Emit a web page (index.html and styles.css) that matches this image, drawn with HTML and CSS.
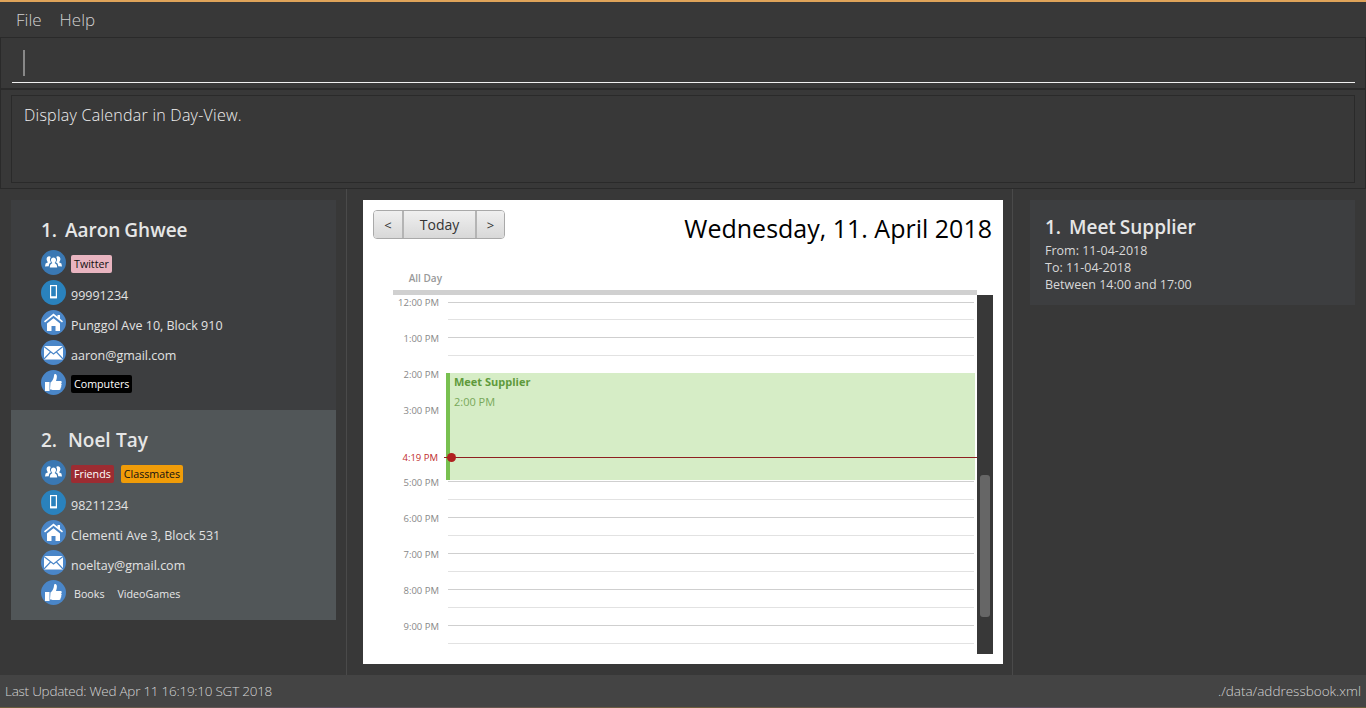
FILE: index.html
```html
<!DOCTYPE html>
<html lang="en">
<head>
    <meta charset="UTF-8">
    <title>Address App</title>
    <link rel="stylesheet" href="styles.css">
</head>
<body>
<svg class="sprites" width="0" height="0">
    <symbol id="i-group" viewBox="0 0 25 25">
        <path fill="#fff" d="M4 16.500l.6-3 2.400-1.300C6 11.200 5.600 10 5.600 9c0-1.700 1.200-2.800 2.500-2.800.7 0 1.300.3 1.700.7-.5.7-.8 1.500-.8 2.300 0 1.300.5 2.400 1.100 3.100l-1.300 1c-.6.600-.9 1.500-1 3z"/>
        <path fill="#fff" d="M21 16.500l-.6-3-2.400-1.300c1-1 1.400-2.200 1.400-3.200 0-1.700-1.200-2.800-2.500-2.800-.7 0-1.300.3-1.700.7.500.7.800 1.500.8 2.300 0 1.300-.5 2.400-1.100 3.100l1.300 1c.6.600.9 1.500 1 3z"/>
        <path fill="#fff" d="M8.800 17.500c.1-2 .5-3 1.200-3.500l1.400-.9c-.9-.9-1.400-2-1.400-3.100 0-1.400 1.100-2.500 2.500-2.500s2.500 1.100 2.500 2.500c0 1.100-.5 2.200-1.400 3.100l1.400.9c.7.500 1.100 1.500 1.200 3.500z"/>
    </symbol>
    <symbol id="i-phone" viewBox="0 0 25 25">
        <path fill="none" stroke="#fff" stroke-width="1.200" d="M9.600 5.600h5.800v12H9.600z"/>
        <path fill="#fff" d="M9.200 16.200h6.600v2H9.200z"/>
    </symbol>
    <symbol id="i-home" viewBox="0 0 25 25">
        <path fill="#fff" d="M12.500 3.500l4 3.200V5h2.500v3.700l3 2.500-1 1.300-8.500-6.800L4 12.500l-1-1.300z"/>
        <path fill="#fff" d="M12.500 8.300l6.500 5.200V21h-4.500v-5h-4v5H6v-7.500z"/>
    </symbol>
    <symbol id="i-mail" viewBox="0 0 25 25">
        <path fill="#fff" d="M3 6h19v13.500H3z"/>
        <path fill="none" stroke="#4a86c8" stroke-width="1.100" d="M3 6.500l9.500 7.500L22 6.500M3 19l7-7.500M22 19l-7-7.500"/>
    </symbol>
    <symbol id="i-thumb" viewBox="0 0 25 25">
        <path fill="#fff" d="M4 12h4.500v9H4z"/>
        <path fill="#fff" d="M9.500 12.500c2-1.500 3.400-4 3.700-8 .1-.8 2-.7 2.500.8.500 1.700 0 4-.7 5.700h4.500c1.600 0 1.700 2 .5 2.400 1 .5.900 2-.1 2.400.7.600.5 1.900-.4 2.200.3 1-.3 2-1.400 2h-6.600c-1 0-1.500-.5-2.500-.7z"/>
    </symbol>
</svg>

<div class="app">
    <nav class="menu-bar">
        <span class="menu-item">File</span>
        <span class="menu-item">Help</span>
    </nav>

    <section class="command-box">
        <div class="command-field"><span class="caret"></span></div>
    </section>

    <section class="result-box">
        <div class="result-text">Display Calendar in Day-View.</div>
    </section>

    <main class="main">
        <aside class="person-panel">
            <article class="person-card">
                <h2 class="card-title">1.&nbsp; Aaron Ghwee</h2>
                <div class="row tags-row">
                    <svg class="icon icon-dark"><use href="#i-group"/></svg>
                    <span class="tag tag-pink">Twitter</span>
                </div>
                <div class="row">
                    <svg class="icon icon-teal"><use href="#i-phone"/></svg>
                    <span>99991234</span>
                </div>
                <div class="row">
                    <svg class="icon"><use href="#i-home"/></svg>
                    <span>Punggol Ave 10, Block 910</span>
                </div>
                <div class="row">
                    <svg class="icon"><use href="#i-mail"/></svg>
                    <span>aaron@gmail.com</span>
                </div>
                <div class="row tags-row">
                    <svg class="icon"><use href="#i-thumb"/></svg>
                    <span class="tag tag-black">Computers</span>
                </div>
            </article>

            <article class="person-card selected">
                <h2 class="card-title">2.&nbsp; Noel Tay</h2>
                <div class="row tags-row">
                    <svg class="icon icon-dark"><use href="#i-group"/></svg>
                    <span class="tag tag-red">Friends</span>
                    <span class="tag tag-orange">Classmates</span>
                </div>
                <div class="row">
                    <svg class="icon icon-teal"><use href="#i-phone"/></svg>
                    <span>98211234</span>
                </div>
                <div class="row">
                    <svg class="icon"><use href="#i-home"/></svg>
                    <span>Clementi Ave 3, Block 531</span>
                </div>
                <div class="row">
                    <svg class="icon"><use href="#i-mail"/></svg>
                    <span>noeltay@gmail.com</span>
                </div>
                <div class="row tags-row">
                    <svg class="icon"><use href="#i-thumb"/></svg>
                    <span class="tag">Books</span>
                    <span class="tag">VideoGames</span>
                </div>
            </article>
        </aside>

        <section class="calendar-panel">
            <div class="calendar">
                <header class="cal-head">
                    <div class="cal-nav">
                        <span class="cal-btn cal-arrow">&lt;</span>
                        <span class="cal-btn cal-today">Today</span>
                        <span class="cal-btn cal-arrow">&gt;</span>
                    </div>
                    <div class="cal-date">Wednesday, 11. April 2018</div>
                </header>
                <div class="all-day">All Day</div>
                <div class="all-day-bar"></div>
                <div class="day-view">
                    <div class="hours">
                        <div class="hour"><span class="hour-label">12:00 PM</span></div>
                        <div class="hour"><span class="hour-label">1:00 PM</span></div>
                        <div class="hour"><span class="hour-label">2:00 PM</span></div>
                        <div class="hour"><span class="hour-label">3:00 PM</span></div>
                        <div class="hour"><span class="hour-label"></span></div>
                        <div class="hour"><span class="hour-label">5:00 PM</span></div>
                        <div class="hour"><span class="hour-label">6:00 PM</span></div>
                        <div class="hour"><span class="hour-label">7:00 PM</span></div>
                        <div class="hour"><span class="hour-label">8:00 PM</span></div>
                        <div class="hour"><span class="hour-label">9:00 PM</span></div>
                    </div>
                    <div class="event">
                        <div class="event-title">Meet Supplier</div>
                        <div class="event-time">2:00 PM</div>
                    </div>
                    <div class="now-line">
                        <span class="now-label">4:19 PM</span>
                        <span class="now-dot"></span>
                    </div>
                    <div class="cal-scroll"><div class="cal-thumb"></div></div>
                </div>
            </div>
        </section>

        <aside class="event-panel">
            <article class="event-card">
                <h2 class="card-title">1.&nbsp; Meet Supplier</h2>
                <div class="event-line">From: 11-04-2018</div>
                <div class="event-line">To: 11-04-2018</div>
                <div class="event-line">Between 14:00 and 17:00</div>
            </article>
        </aside>
    </main>

    <footer class="status-bar">
        <span>Last Updated: Wed Apr 11 16:19:10 SGT 2018</span>
        <span class="status-path">./data/addressbook.xml</span>
    </footer>
    <div class="desktop-strip"></div>
</div>
</body>
</html>
```

FILE: styles.css
```css
html, body {
    margin: 0;
    height: 100%;
    overflow: hidden;
}
body {
    font-family: "Open Sans", "Noto Sans", sans-serif;
    background-color: #383838;
    color: #fff;
}
.sprites { display: block; height: 0; }

.app {
    height: 708px;
    display: flex;
    flex-direction: column;
    border-top: 2px solid #dfa359;
    box-sizing: border-box;
}

/* top bars */
.menu-bar {
    height: 35px;
    flex: none;
    display: flex;
    align-items: center;
    gap: 18px;
    padding-left: 16px;
    font-size: 17px;
    font-weight: 300;
    color: #d0d0d0;
    box-sizing: border-box;
}
.command-box {
    height: 52px;
    flex: none;
    box-sizing: border-box;
    border: 1px solid #2a2a2a;
    padding: 10px 10px 6px 11px;
}
.command-field {
    height: 34px;
    border-bottom: 1px solid #f0f0f0;
    padding-left: 11px;
}
.caret {
    display: block;
    width: 2px;
    height: 26px;
    background-color: #888;
    position: relative;
    top: 2px;
}
.result-box {
    height: 100px;
    flex: none;
    box-sizing: border-box;
    border: 1px solid #2a2a2a;
    padding: 5px 10px;
}
.result-text {
    height: 100%;
    box-sizing: border-box;
    border: 1px solid #2a2a2a;
    padding: 9px 12px;
    font-size: 16px;
    font-weight: 300;
    line-height: 20px;
    letter-spacing: 0.25px;
    color: #f0f0f0;
}

/* three columns */
.main {
    flex: 1;
    display: flex;
    min-height: 0;
}
.person-panel {
    width: 346px;
    flex: none;
    box-sizing: border-box;
    padding: 11px 10px 0 11px;
}
.calendar-panel {
    width: 667px;
    flex: none;
    box-sizing: border-box;
    border-left: 1px solid #4a4a4a;
    border-right: 1px solid #4a4a4a;
    padding: 11px 9px 11px 16px;
}
.event-panel {
    flex: 1;
    padding: 11px 11px 0 17px;
}

/* person cards */
.person-card {
    height: 210px;
    box-sizing: border-box;
    background-color: #3d3e40;
    padding: 18px 0 0 30px;
    font-size: 12.500px;
    color: #e2e2e2;
}
.person-card.selected { background-color: #515658; }
.card-title {
    margin: 0 0 7px;
    font-size: 19px;
    line-height: 25px;
    font-weight: 600;
    color: #e6e6e6;
    word-spacing: -1px;
}
.selected .card-title { word-spacing: 0.5px; }
.row {
    display: flex;
    align-items: center;
    height: 25px;
    margin-bottom: 5px;
    gap: 5px;
}
.row span { position: relative; top: 3px; }
.tags-row { gap: 7px; }
.tags-row span { top: 1px; }
.icon {
    width: 25px;
    height: 25px;
    flex: none;
    border-radius: 50%;
    background-color: #4a86c8;
}
.icon-dark { background-color: #3a78b3; }
.icon-teal { background-color: #2a82bd; }
.icon + .tag { margin-left: -2px; }
.tag {
    padding: 0 3px;
    height: 18px;
    line-height: 18px;
    font-size: 10.700px;
    border-radius: 2px;
    color: #e8e8e8;
}
.tag-pink { background-color: #e8b4c0; color: #111; }
.tag-black { background-color: #000; color: #fff; }
.tag-red { background-color: #9c2c32; color: #fff; }
.tag-orange { background-color: #f09c08; color: #111; }

/* calendar */
.calendar {
    position: relative;
    height: 464px;
    background-color: #fff;
    padding: 10px 10px 0 10px;
    box-sizing: border-box;
}
.cal-head {
    display: flex;
    justify-content: space-between;
    align-items: flex-start;
    height: 60px;
    padding-right: 1px;
}
.cal-nav {
    display: flex;
    height: 29px;
    box-sizing: border-box;
    border: 1px solid #a9a9a9;
    border-radius: 4px;
    overflow: hidden;
}
.cal-btn {
    display: flex;
    align-items: center;
    justify-content: center;
    background: linear-gradient(#f0f0f0, #d8d8d8);
    color: #333;
    font-size: 14px;
    border-left: 2px solid #b4b4b4;
    box-sizing: border-box;
}
.cal-btn:first-child { border-left: none; }
.cal-arrow { width: 29px; font-size: 13px; }
.cal-arrow:first-child { width: 28px; }
.cal-today { width: 73px; }
.cal-date {
    font-size: 25px;
    line-height: 36px;
    color: #000;
    white-space: nowrap;
}
.all-day {
    width: 69px;
    text-align: right;
    font-size: 10px;
    font-weight: 600;
    line-height: 14px;
    color: #999;
    margin-top: 1px;
}
.all-day-bar {
    height: 5px;
    margin: 5px 16px 0 20px;
    background-color: #d0d0d0;
}
.day-view {
    position: relative;
    height: 359px;
}
.hours { padding-top: 7px; }
.hour {
    position: relative;
    height: 36px;
    margin-left: 75px;
    margin-right: 19px;
    box-sizing: border-box;
    border-top: 1px solid #cfcfcf;
}
.hour:first-child { height: 35px; }
.hour::after {
    content: "";
    display: block;
    margin-top: 17px;
    border-top: 1px solid #e2e2e2;
}
.hour:first-child::after { margin-top: 16px; }
.hour-label {
    position: absolute;
    right: 100%;
    top: -6px;
    width: 60px;
    margin-right: 9px;
    text-align: right;
    font-size: 9.500px;
    line-height: 14px;
    color: #888;
    white-space: nowrap;
}
.hour:first-child .hour-label { top: -7px; }
.event {
    position: absolute;
    left: 73px;
    right: 18px;
    top: 78px;
    height: 107px;
    box-sizing: border-box;
    border-left: 4px solid #78c050;
    background-color: #d6edc6;
    padding: 2px 0 0 4px;
    font-size: 11px;
}
.event-title { font-weight: 700; color: #5f9a3c; line-height: 14px; }
.event-time { color: #78a85a; margin-top: 6px; line-height: 14px; }
.now-line {
    position: absolute;
    left: 71px;
    right: 16px;
    top: 162px;
    height: 1px;
    background-color: #8e2020;
}
.now-label {
    position: absolute;
    right: 100%;
    top: -6px;
    margin-right: 6px;
    font-size: 9.500px;
    line-height: 14px;
    color: #c02c2c;
    white-space: nowrap;
}
.now-dot {
    position: absolute;
    left: 3px;
    top: -4px;
    width: 9px;
    height: 9px;
    border-radius: 50%;
    background-color: #b02020;
}
.cal-scroll {
    position: absolute;
    right: 0;
    top: 0;
    width: 16px;
    height: 359px;
    background-color: #383838;
}
.cal-thumb {
    position: absolute;
    left: 3px;
    top: 180px;
    width: 10px;
    height: 142px;
    border-radius: 3px;
    background-color: #666;
}

/* event card */
.event-card {
    height: 105px;
    box-sizing: border-box;
    background-color: #3d3e40;
    padding: 15px 0 0 15px;
}
.event-card .card-title { margin-bottom: 2px; }
.event-line {
    font-size: 12.500px;
    line-height: 17px;
    color: #d8d8d8;
}

/* status */
.status-bar {
    height: 32px;
    flex: none;
    display: flex;
    justify-content: space-between;
    align-items: center;
    padding: 0 5px;
    box-sizing: border-box;
    background-color: #444;
    color: #d4d4d4;
    font-size: 13.500px;
    font-weight: 300;
    letter-spacing: -0.25px;
}
.status-path { letter-spacing: 0; }
.desktop-strip {
    height: 1px;
    flex: none;
    background: linear-gradient(90deg, #6a5e3c, #5c5060 25%, #70603c 50%, #5c5060 75%, #6a5e3c);
}
```
